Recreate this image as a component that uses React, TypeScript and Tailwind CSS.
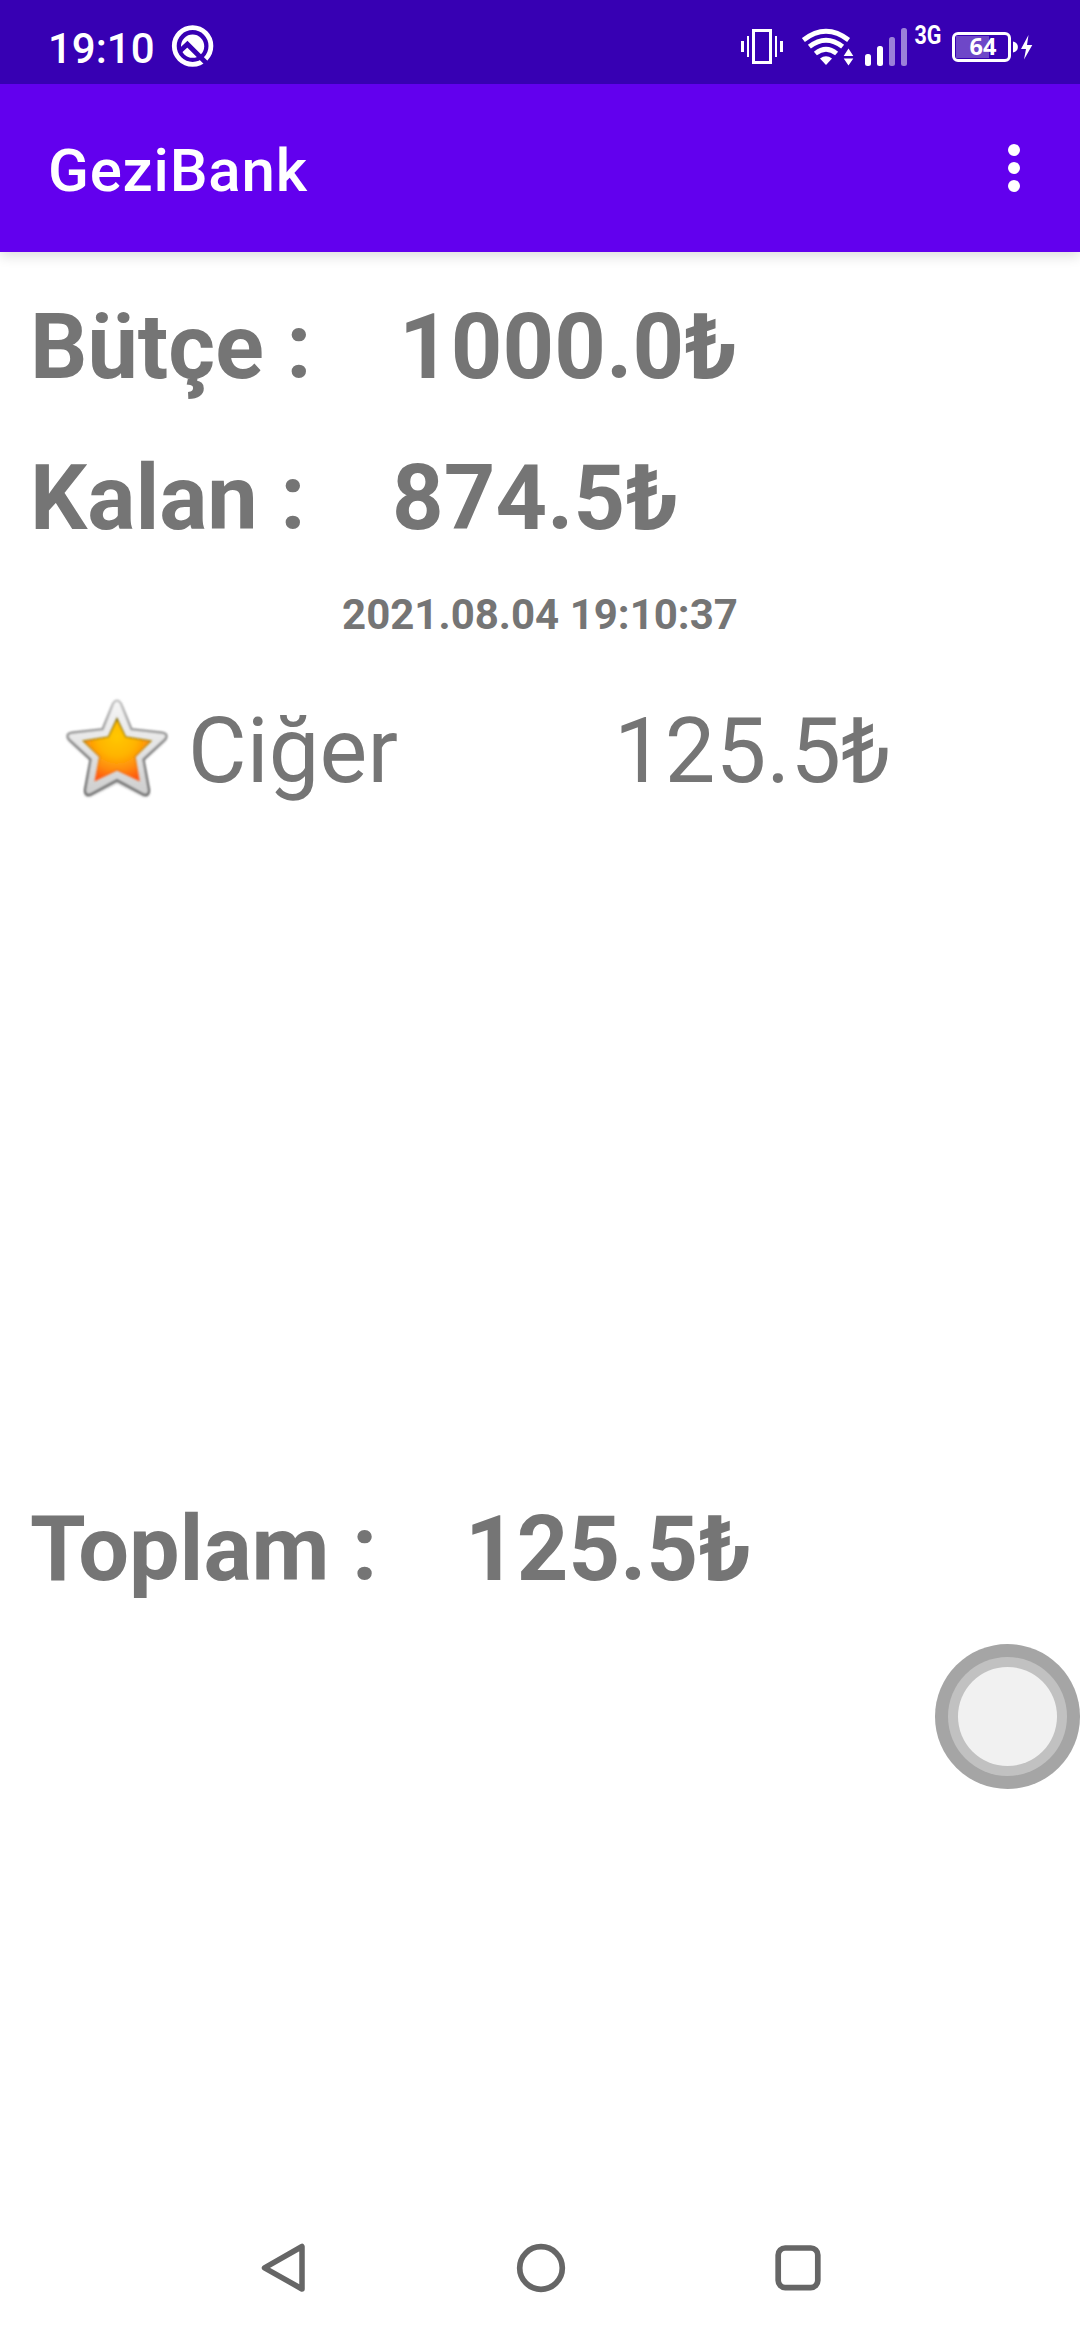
function QLogoIcon() {
  return (
    <svg className="ml-[17px] h-[84px] w-[43px]" viewBox="171 0 43 84" fill="none">
      <circle cx="192.6" cy="46" r="18.3" stroke="#fff" strokeWidth="4.8" />
      <circle cx="192.6" cy="46.2" r="11.6" fill="#fff" />
      <path d="M179.5 51.5L187.4 44.2L209 65.8" stroke="#3700b3" strokeWidth="4.8" />
    </svg>
  );
}

function VibrateIcon() {
  return (
    <svg className="h-[84px] w-[42px]" viewBox="741 0 42 84">
      <rect x="753.5" y="30.5" width="17" height="32" fill="none" stroke="#fff" strokeWidth="3" />
      <path d="M741 41h3v11h-3zM747 36h2v21h-2zM775 36h2v21h-2zM780 41h3v11h-3z" fill="#fff" />
    </svg>
  );
}

function WifiIcon() {
  return (
    <svg className="ml-[19px] h-[84px] w-[52px]" viewBox="802 0 52 84" fill="none">
      <g stroke="#fff" strokeWidth="4.8">
        <path d="M803.4 40Q826 22.5 848.6 40" />
        <path d="M809.4 46.7Q826 33.7 842.6 46.7" />
        <path d="M815.4 53.5Q826 45 836.6 53.5" />
      </g>
      <path d="M820 58.5Q826 54 832 58.5L826 65Z" fill="#fff" />
      <path d="M848.5 48.5L853.3 56H843.7ZM848.5 65.5L853.3 58.5H843.7Z" fill="#fff" />
    </svg>
  );
}

function SignalIcon() {
  return (
    <svg className="ml-[11px] h-[84px] w-[42px]" viewBox="865 0 42 84" fill="#fff">
      <rect x="865" y="54" width="6" height="12" rx="2.5" />
      <rect x="877" y="46" width="6" height="20" rx="2.5" />
      <rect x="889" y="37" width="6" height="29" rx="2.5" opacity=".5" />
      <rect x="901" y="28" width="6" height="38" rx="2.5" opacity=".5" />
    </svg>
  );
}

function NetworkLabel() {
  return (
    <svg className="ml-[7px] h-[84px] w-[27px]" viewBox="914 0 27 84" overflow="visible">
      <text
        x="914.5"
        y="44"
        fontFamily="Roboto, sans-serif"
        fontWeight="700"
        fontSize="25"
        textLength="27"
        lengthAdjust="spacingAndGlyphs"
        fill="#fff"
      >
        3G
      </text>
    </svg>
  );
}

function BatteryIcon() {
  return (
    <svg className="ml-[10px] h-[84px] w-[82px]" viewBox="951 0 82 84">
      <rect x="953.5" y="33.5" width="56" height="27" rx="4.5" fill="none" stroke="#fff" strokeWidth="3" />
      <rect x="956" y="36" width="33" height="22" fill="#fff" opacity=".28" />
      <path d="M1013 41.5C1019.5 42.5 1019.5 51.5 1013 52.5Z" fill="#fff" />
      <path d="M1028.5 35L1021 49H1026L1024 59.5L1032.3 45H1027Z" fill="#fff" />
      <text x="969.5" y="55" fontFamily="Noto Sans, sans-serif" fontWeight="700" fontSize="23.5" fill="#fff">
        64
      </text>
    </svg>
  );
}

function StarIcon() {
  return (
    <svg className="-mt-[9px] h-[110px] w-[110px] shrink-0" viewBox="67 95 330 330">
      <defs>
        <linearGradient id="rim" x1="0" y1="0" x2="0" y2="1">
          <stop offset="0" stopColor="#f6f6f6" />
          <stop offset="0.5" stopColor="#e4e4e4" />
          <stop offset="1" stopColor="#cecece" />
        </linearGradient>
        <linearGradient id="edge" x1="0" y1="0" x2="0" y2="1">
          <stop offset="0" stopColor="#c4c4c4" />
          <stop offset="0.45" stopColor="#858585" />
          <stop offset="1" stopColor="#606060" />
        </linearGradient>
        <radialGradient id="gold" gradientUnits="userSpaceOnUse" cx="232" cy="225" r="145">
          <stop offset="0" stopColor="#ffc800" />
          <stop offset="0.4" stopColor="#ffb400" />
          <stop offset="0.7" stopColor="#ff8a0c" />
          <stop offset="1" stopColor="#ff4a10" />
        </radialGradient>
        <linearGradient id="goldEdge" x1="0" y1="0" x2="0" y2="1">
          <stop offset="0" stopColor="#7a6400" />
          <stop offset="0.45" stopColor="#b98a10" />
          <stop offset="0.75" stopColor="#f07818" />
          <stop offset="1" stopColor="#ff5a20" />
        </linearGradient>
        <filter id="soft" x="-20%" y="-20%" width="140%" height="140%">
          <feGaussianBlur stdDeviation="4" />
        </filter>
        <filter id="fine" x="-10%" y="-10%" width="120%" height="120%">
          <feGaussianBlur stdDeviation="2.4" />
        </filter>
      </defs>
      <path
        d="M220 124Q232 108 244 124L276 201L368 212Q388 218 377 236L312 295L329 388Q328 408 310 402L232 362L154 402Q136 408 135 388L152 295L87 236Q76 218 96 212L188 201Z"
        fill="#666"
        opacity=".45"
        filter="url(#soft)"
        transform="translate(0 3)"
      />
      <path
        d="M221 126Q232 110 243 126L275 204L366 214Q388 217 376 234L311 294L328 386Q328 406 311 399L232 356L153 399Q136 406 136 386L153 294L88 234Q76 217 98 214L189 204Z"
        fill="url(#rim)"
        stroke="url(#edge)"
        strokeWidth="6.5"
        filter="url(#fine)"
      />
      <path
        d="M232 172L258 227L334 239L286 286L298 357L232 326L167 357L180 286L131 239L206 227Z"
        fill="url(#gold)"
        stroke="url(#goldEdge)"
        strokeWidth="4"
        filter="url(#fine)"
      />
    </svg>
  );
}

export default function App() {
  return (
    <div className="flex h-[2340px] w-[1080px] flex-col overflow-hidden bg-white font-['Roboto',sans-serif] text-[#757575]">
      <div className="relative z-20 flex h-[84px] shrink-0 items-center bg-[#3700b3] text-white">
        <span className="mt-[14px] ml-[48px] w-[106px] text-[42px] leading-[50px] font-medium whitespace-nowrap">
          19:10
        </span>
        <QLogoIcon />
        <div className="ml-auto flex items-center pr-[47px]">
          <VibrateIcon />
          <WifiIcon />
          <SignalIcon />
          <NetworkLabel />
          <BatteryIcon />
        </div>
      </div>

      <header className="z-10 flex h-[168px] shrink-0 items-center justify-between bg-[#6200ee] pr-[60px] pl-[48px] text-white shadow-[0_4px_12px_rgba(0,0,0,0.14)]">
        <h1 className="mt-[6px] text-[60px] leading-[80px] font-medium tracking-[0.8px]">GeziBank</h1>
        <button aria-label="More options" className="flex flex-col gap-[6px]">
          <span className="size-[12px] rounded-full bg-white" />
          <span className="size-[12px] rounded-full bg-white" />
          <span className="size-[12px] rounded-full bg-white" />
        </button>
      </header>

      <main className="flex flex-1 flex-col pt-[36px] text-[90px] leading-[120px] whitespace-nowrap">
        <div className="flex pl-[30px] font-bold">
          <span className="w-[369px]">Bütçe :</span>
          <span className="tracking-[0.15px]">1000.0₺</span>
        </div>
        <div className="mt-[31px] flex pl-[30px] font-bold">
          <span className="w-[362px]">Kalan :</span>
          <span className="tracking-[0.15px]">874.5₺</span>
        </div>
        <div className="mt-[28px] text-center text-[42px] leading-[56px] font-bold">2021.08.04 19:10:37</div>
        <div className="mt-[49px] flex h-[120px] items-center pl-[62px]">
          <StarIcon />
          <span className="ml-[16px] w-[426px] tracking-[0.2px]">Ciğer</span>
          <span className="tracking-[0.25px]">125.5₺</span>
        </div>
        <div className="mt-[678px] flex pl-[30px] font-bold">
          <span className="w-[435px]">Toplam :</span>
          <span className="tracking-[0.15px]">125.5₺</span>
        </div>
        <button
          aria-label="Assistive touch"
          className="mt-[34px] flex size-[145px] items-center justify-center self-end rounded-full bg-[#a5a5a5]"
        >
          <span className="flex size-[119px] items-center justify-center rounded-full bg-[#c1c1c1]">
            <span className="size-[99px] rounded-full bg-[#f1f1f1]" />
          </span>
        </button>
      </main>

      <nav className="flex h-[144px] shrink-0 items-center justify-between pr-[258px] pl-[261px]">
        <svg className="h-[50px] w-[46px]" viewBox="261 2243 46 50" fill="none">
          <path d="M302 2246.5V2289L264.5 2267.8Z" stroke="#666" strokeWidth="5.5" strokeLinejoin="round" />
        </svg>
        <svg className="size-[50px]" viewBox="515 2243 50 50" fill="none">
          <circle cx="540" cy="2268" r="21.3" stroke="#666" strokeWidth="5.7" />
        </svg>
        <svg className="h-[50px] w-[48px]" viewBox="774 2243 48 50" fill="none">
          <rect x="778.2" y="2248" width="39.6" height="39.6" rx="7" stroke="#666" strokeWidth="5.7" />
        </svg>
      </nav>
    </div>
  );
}
